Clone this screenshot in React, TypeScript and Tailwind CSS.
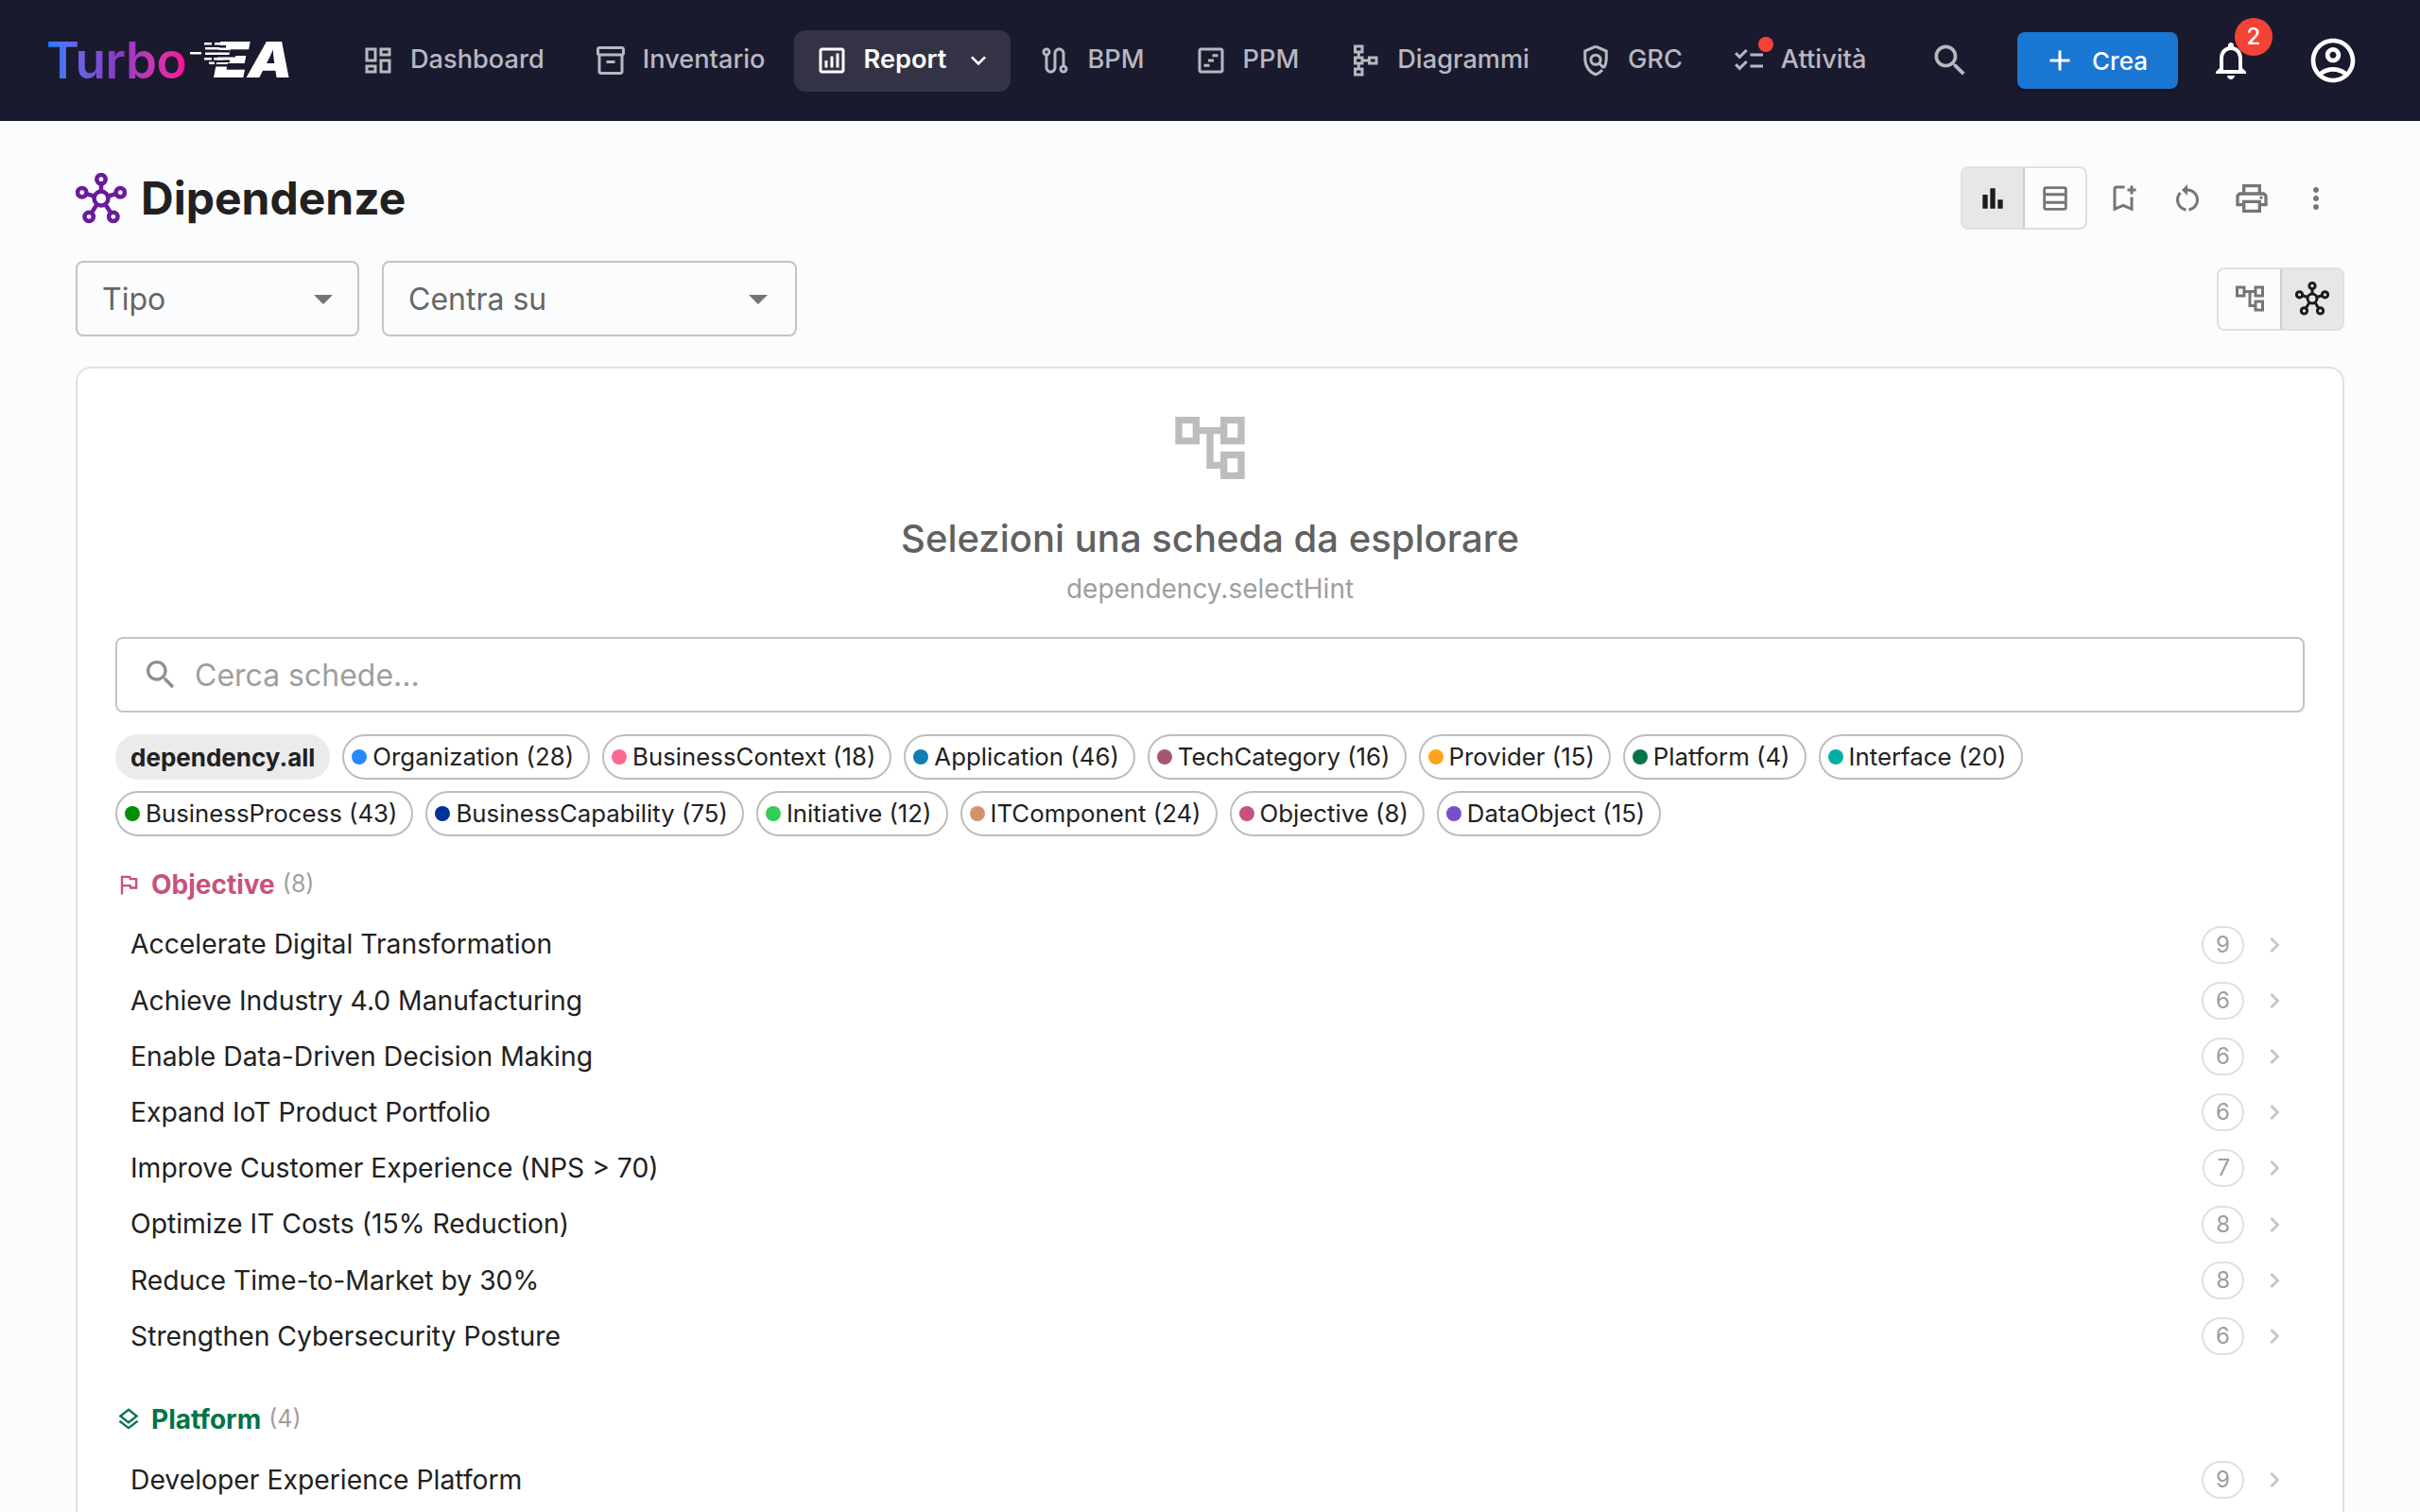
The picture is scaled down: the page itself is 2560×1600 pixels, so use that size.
import React from "react";

type IconProps = { d: string; size: number; className?: string };
const Icon = ({ d, size, className }: IconProps) => (
  <svg viewBox="0 0 24 24" width={size} height={size} fill="currentColor" fillRule="evenodd" className={`shrink-0 ${className ?? ""}`}>
    <path d={d} />
  </svg>
);

const P = {
  dashboard: "M19 5v2h-4V5zM9 5v6H5V5zm10 8v6h-4v-6zM9 17v2H5v-2zM21 3h-8v6h8zM11 3H3v10h8zm10 8h-8v10h8zm-10 4H3v6h8z",
  inventory: "M20 2H4c-1 0-2 .9-2 2v3.01c0 .72.43 1.34 1 1.69V20c0 1.1 1.1 2 2 2h14c.9 0 2-.9 2-2V8.7c.57-.35 1-.97 1-1.69V4c0-1.1-1-2-2-2m-1 18H5V9h14zm1-13H4V4h16zM9 12h6v2H9z",
  assessment: "M19 3H5c-1.1 0-2 .9-2 2v14c0 1.1.9 2 2 2h14c1.1 0 2-.9 2-2V5c0-1.1-.9-2-2-2m0 16H5V5h14zM7 12h2v5H7zm4-3h2v8h-2zm4-2h2v10h-2z",
  route: "M19 15.18V7c0-2.21-1.79-4-4-4s-4 1.79-4 4v10c0 1.1-.9 2-2 2s-2-.9-2-2V8.82C8.16 8.4 9 7.3 9 6c0-1.66-1.34-3-3-3S3 4.34 3 6c0 1.3.84 2.4 2 2.82V17c0 2.21 1.79 4 4 4s4-1.79 4-4V7c0-1.1.9-2 2-2s2 .9 2 2v8.18c-1.16.41-2 1.51-2 2.82 0 1.66 1.34 3 3 3s3-1.34 3-3c0-1.3-.84-2.4-2-2.82M6 5c.55 0 1 .45 1 1s-.45 1-1 1-1-.45-1-1 .45-1 1-1m12 14c-.55 0-1-.45-1-1s.45-1 1-1 1 .45 1 1-.45 1-1 1",
  timeline: "M19 3H5c-1.1 0-2 .9-2 2v14c0 1.1.9 2 2 2h14c1.1 0 2-.9 2-2V5c0-1.1-.9-2-2-2m0 16H5V5h14zM13 7.5h4v2h-4zM10 11h4v2h-4zM7 14.5h4v2H7z",
  schema: "M14 9v2h-3V9H8.5V7H11V1H4v6h2.5v2H4v6h2.5v2H4v6h7v-6H8.5v-2H11v-2h3v2h7V9h-7zM9 5H6V3h3v2zm0 16H6v-2h3v2zm0-8H6v-2h3v2zm10 0h-3v-2h3v2z",
  checklist: "M22 7h-9v2h9zm0 8h-9v2h9zM5.54 11 2 7.46l1.41-1.41 2.12 2.12 4.24-4.24 1.41 1.41zm0 8L2 15.46l1.41-1.41 2.12 2.12 4.24-4.24 1.41 1.41z",
  search: "M15.5 14h-.79l-.28-.27C15.41 12.59 16 11.11 16 9.5 16 5.91 13.09 3 9.5 3S3 5.91 3 9.5 5.91 16 9.5 16c1.61 0 3.09-.59 4.23-1.57l.27.28v.79l5 4.99L20.49 19zm-6 0C7.01 14 5 11.99 5 9.5S7.01 5 9.5 5 14 7.01 14 9.5 11.99 14 9.5 14",
  add: "M19 13h-6v6h-2v-6H5v-2h6V5h2v6h6z",
  bell: "M12 22c1.1 0 2-.9 2-2h-4c0 1.1.9 2 2 2m6-6v-5c0-3.07-1.63-5.64-4.5-6.32V4c0-.83-.67-1.5-1.5-1.5s-1.5.67-1.5 1.5v.68C7.64 5.36 6 7.92 6 11v5l-2 2v1h16v-1zm-2 1H8v-6c0-2.48 1.51-4.5 4-4.5s4 2.02 4 4.5z",
  user: "M12 2C6.48 2 2 6.48 2 12s4.48 10 10 10 10-4.48 10-10S17.52 2 12 2M7.35 18.5C8.66 17.56 10.26 17 12 17s3.34.56 4.65 1.5c-1.31.94-2.91 1.5-4.65 1.5s-3.34-.56-4.65-1.5m10.79-1.38C16.45 15.8 14.32 15 12 15s-4.45.8-6.14 2.12C4.7 15.73 4 13.95 4 12c0-4.42 3.58-8 8-8s8 3.58 8 8c0 1.95-.7 3.73-1.86 5.12M12 6c-1.93 0-3.5 1.57-3.5 3.5S10.07 13 12 13s3.5-1.57 3.5-3.5S13.93 6 12 6m0 5c-.83 0-1.5-.67-1.5-1.5S11.17 8 12 8s1.5.67 1.5 1.5S12.83 11 12 11",
  tree: "M22 11V3h-7v3H9V3H2v8h7V8h2v10h4v3h7v-8h-7v3h-2V8h2v3h7zM7 9H4V5h3v4zm10 6h3v4h-3v-4zm0-10h3v4h-3V5z",
  bars: "M4 9h4v11H4zm12 4h4v7h-4zm-6-9h4v16h-4z",
  rows: "M19 3H5c-1.1 0-2 .9-2 2v14c0 1.1.9 2 2 2h14c1.1 0 2-.9 2-2V5c0-1.1-.9-2-2-2zm0 2v3H5V5h14zm0 5v4H5v-4h14zM5 19v-3h14v3H5z",
  bookmark: "M17 11v6.97l-5-2.14-5 2.14V5h6V3H7c-1.1 0-2 .9-2 2v16l7-3 7 3V11zm4-4h-2v2h-2V7h-2V5h2V3h2v2h2z",
  restart: "M12 5V2L8 6l4 4V7c3.31 0 6 2.69 6 6 0 2.97-2.17 5.43-5 5.91v2.02c3.95-.49 7-3.85 7-7.93 0-4.42-3.58-8-8-8zm-6 8c0-1.65.67-3.15 1.76-4.24L6.34 7.34C4.9 8.79 4 10.79 4 13c0 4.08 3.05 7.44 7 7.93v-2.02c-2.83-.48-5-2.94-5-5.91z",
  print: "M19 8h-1V3H6v5H5c-1.66 0-3 1.34-3 3v6h4v4h12v-4h4v-6c0-1.66-1.34-3-3-3M8 5h8v3H8zm8 14H8v-4h8zm2-4v-2H6v2H4v-4c0-.55.45-1 1-1h14c.55 0 1 .45 1 1v4zM18 10.5a1 1 0 1 0 0 2 1 1 0 0 0 0-2",
  more: "M12 8c1.1 0 2-.9 2-2s-.9-2-2-2-2 .9-2 2 .9 2 2 2m0 2c-1.1 0-2 .9-2 2s.9 2 2 2 2-.9 2-2-.9-2-2-2m0 6c-1.1 0-2 .9-2 2s.9 2 2 2 2-.9 2-2-.9-2-2-2",
  flag: "M12.36 6l.4 2H18v6h-3.36l-.4-2H7V6h5.36M14 4H5v17h2v-7h5.6l.4 2h7V6h-5.6L14 4z",
  layers: "M11.99 18.54l-7.37-5.73L3 14.07l9 7 9-7-1.63-1.27zM12 16l7.36-5.73L21 9l-9-7-9 7 1.63 1.27L12 16zm0-11.47L17.74 9 12 13.47 6.26 9 12 4.53z",
  chevron: "M10 6 8.59 7.41 13.17 12l-4.58 4.59L10 18l6-6z",
  expand: "M16.59 8.59 12 13.17 7.41 8.59 6 10l6 6 6-6z",
  arrow: "M7 10l5 5 5-5z",
};

const Hub = ({ size, className }: { size: number; className?: string }) => (
  <svg viewBox="0 0 24 24" width={size} height={size} fill="none" stroke="currentColor" strokeWidth="2" className={`shrink-0 ${className ?? ""}`}>
    <circle cx="12" cy="12" r="3.3" />
    <circle cx="12" cy="3" r="2.1" />
    <circle cx="3" cy="9.2" r="2.1" />
    <circle cx="21" cy="9.2" r="2.1" />
    <circle cx="6.3" cy="20.6" r="2.1" />
    <circle cx="17.7" cy="20.6" r="2.1" />
    <path d="M12 5v3.8M5 9.8l4 1.2M19 9.8l-4 1.2M7.4 18.9l2.7-4.2M16.6 18.9l-2.7-4.2" />
  </svg>
);

const Shield = () => (
  <svg viewBox="0 0 24 24" width={36} height={36} fill="none" stroke="currentColor" strokeWidth="2" className="shrink-0">
    <path d="M12 2.1 4.5 5.4v5.6c0 4.9 3.2 9.6 7.5 10.9 1.8-.6 3.4-1.7 4.6-3.2" />
    <path d="M12 2.1l7.5 3.3v5.6c0 2.2-.6 4.3-1.7 6.1" />
    <circle cx="12" cy="11.5" r="3.4" />
    <path d="M14.5 14l3.3 3.3" />
  </svg>
);

const navBefore = [
  { label: "Dashboard", d: P.dashboard },
  { label: "Inventario", d: P.inventory },
];
const navAfter = [
  { label: "BPM", d: P.route },
  { label: "PPM", d: P.timeline },
  { label: "Diagrammi", d: P.schema },
];

const chips1 = [
  ["Organization (28)", "bg-[#2889ff]"],
  ["BusinessContext (18)", "bg-[#fe6690]"],
  ["Application (46)", "bg-[#0f7eb5]"],
  ["TechCategory (16)", "bg-[#a6566d]"],
  ["Provider (15)", "bg-[#ffa31f]"],
  ["Platform (4)", "bg-[#027446]"],
  ["Interface (20)", "bg-[#02afa4]"],
];
const chips2 = [
  ["BusinessProcess (43)", "bg-[#028f00]"],
  ["BusinessCapability (75)", "bg-[#003399]"],
  ["Initiative (12)", "bg-[#33cc58]"],
  ["ITComponent (24)", "bg-[#d29270]"],
  ["Objective (8)", "bg-[#c7527d]"],
  ["DataObject (15)", "bg-[#774fcc]"],
];

const objectives: [string, number][] = [
  ["Accelerate Digital Transformation", 9],
  ["Achieve Industry 4.0 Manufacturing", 6],
  ["Enable Data-Driven Decision Making", 6],
  ["Expand IoT Product Portfolio", 6],
  ["Improve Customer Experience (NPS > 70)", 7],
  ["Optimize IT Costs (15% Reduction)", 8],
  ["Reduce Time-to-Market by 30%", 8],
  ["Strengthen Cybersecurity Posture", 6],
];

const NavItem = ({ label, children, className }: { label: string; children: React.ReactNode; className?: string }) => (
  <div className={`flex h-[65px] items-center gap-4 px-[22px] text-[27.2px] font-medium text-[#b8b8c0] ${className ?? ""}`}>
    {children}
    <span className="mb-[2px]">{label}</span>
  </div>
);

const Chip = ({ label, dot }: { label: string; dot: string }) => (
  <div className="flex h-[48px] items-center rounded-full border-2 border-[#bdbdbd] pl-[8px] pr-[15px] text-[25.8px] text-[#212121]">
    <span className={`mr-[6px] h-[16px] w-[16px] rounded-full ${dot}`} />
    <span>{label}</span>
  </div>
);

const Row = ({ label, n }: { label: string; n: number }) => (
  <div className="flex h-[59.2px] items-center justify-between px-4">
    <span className="text-[28.3px] text-[#212121]">{label}</span>
    <div className="flex items-center gap-4">
      <span className="flex h-[40px] items-center rounded-full border-2 border-[#e0e0e0] px-[13px] text-[24px] text-[#9e9e9e]">{n}</span>
      <Icon d={P.chevron} size={32} className="text-[#c4c4c4]" />
    </div>
  </div>
);

export default function App() {
  return (
    <div className="h-[1600px] overflow-hidden bg-[#fbfcfe] font-['Inter',sans-serif]">
      <header className="flex h-[128px] items-center bg-[#1a1a2e]">
        <div className="relative ml-[49px] mr-[56px] flex h-[60px] w-[255px] shrink-0 items-center">
          <span className="bg-gradient-to-r from-[#0f80ff] via-[#8a38c8] to-[#ff0099] bg-clip-text text-[53px] font-semibold leading-none tracking-[-0.5px] text-transparent">Turbo</span>
          <span className="absolute left-[177px] top-[4px] origin-left scale-x-[1.15] text-[52px] font-black italic leading-none tracking-[-1px] text-white">EA</span>
          <svg className="absolute left-[150px] top-0" width="60" height="60" viewBox="0 0 60 60">
            <g fill="#1a1a2e">
              <rect x="26" y="14" width="14" height="2.5" />
              <rect x="26" y="19" width="18" height="2.5" />
              <rect x="26" y="24" width="24" height="2.5" />
              <rect x="26" y="29.5" width="18" height="2.5" />
              <rect x="24" y="34" width="18" height="2.5" />
            </g>
            <g fill="#ffffff">
              <rect x="17" y="11" width="8" height="2.5" />
              <rect x="28" y="11" width="10" height="2.5" />
              <rect x="2" y="21" width="12" height="2.5" />
              <rect x="18" y="16" width="15" height="2.5" />
              <rect x="18" y="21.5" width="15" height="2.5" />
              <rect x="17" y="27" width="8" height="2.5" />
              <rect x="27" y="27" width="10" height="2.5" />
              <rect x="22" y="31.5" width="6" height="2.5" />
            </g>
          </svg>
        </div>
        <div className="flex items-center gap-2">
          {navBefore.map((n) => (
            <NavItem key={n.label} label={n.label}>
              <Icon d={n.d} size={36} />
            </NavItem>
          ))}
          <div className="mr-[-1px] flex h-[65px] items-center gap-4 rounded-[12px] bg-[#333345] pl-[22px] pr-[16px] text-[27.2px] font-semibold text-white">
            <Icon d={P.assessment} size={36} />
            <span className="mb-[2px]">Report</span>
            <Icon d={P.expand} size={32} className="mx-[2px]" />
          </div>
          {navAfter.map((n) => (
            <NavItem key={n.label} label={n.label}>
              <Icon d={n.d} size={36} />
            </NavItem>
          ))}
          <NavItem label="GRC">
            <Shield />
          </NavItem>
          <NavItem label="Attività">
            <div className="relative">
              <Icon d={P.checklist} size={36} />
              <span className="absolute right-[-8px] top-[-7px] h-[16px] w-[16px] rounded-full bg-[#f44336]" />
            </div>
          </NavItem>
        </div>
        <div className="ml-auto flex items-center pr-[64px]">
          <Icon d={P.search} size={44} className="text-[#b8b8c0]" />
          <div className="ml-[49px] flex h-[60px] w-[170px] items-center gap-4 rounded-[8px] bg-[#1976d2] pl-[27px] text-[26px] font-medium text-white shadow-[0_3px_3px_rgba(0,0,0,0.25)]">
            <Icon d={P.add} size={36} />
            <span>Crea</span>
          </div>
          <div className="relative ml-[32px]">
            <Icon d={P.bell} size={48} className="text-white" />
            <span className="absolute left-[28px] top-[-21px] flex h-[40px] w-[40px] items-center justify-center rounded-full bg-[#f44336] text-[24px] font-medium text-white">2</span>
          </div>
          <Icon d={P.user} size={56} className="ml-[56px] text-white" />
        </div>
      </header>

      <main className="px-20 pt-12">
        <div className="flex h-[67px] items-center justify-between">
          <div className="flex items-center gap-[15px]">
            <Hub size={54} className="text-[#6a1b9a]" />
            <h1 className="text-[48px] font-bold leading-none text-[#212121]">Dipendenze</h1>
          </div>
          <div className="flex items-center">
            <div className="flex h-[67px] rounded-[8px] border-2 border-[#e0e0e0]">
              <div className="flex w-[66px] items-center justify-center rounded-l-[6px] border-r-2 border-[#cdcdcf] bg-[#e6e7e9] text-[#1c1c1c]">
                <Icon d={P.bars} size={32} />
              </div>
              <div className="flex w-[64px] items-center justify-center text-[#757575]">
                <Icon d={P.rows} size={34} />
              </div>
            </div>
            <Icon d={P.bookmark} size={36} className="ml-[20px] text-[#757575]" />
            <Icon d={P.restart} size={36} className="ml-[32px] text-[#757575]" />
            <Icon d={P.print} size={40} className="ml-[30px] text-[#757575]" />
            <Icon d={P.more} size={36} className="ml-[30px] mr-[12px] text-[#757575]" />
          </div>
        </div>

        <div className="mt-[33px] flex h-[80px] items-center">
          <div className="flex h-[80px] w-[300px] items-center justify-between rounded-[8px] border-2 border-[#c4c4c4] pl-[26px] pr-[12px] text-[32px] text-[#666666]">
            <span className="mt-[2px]">Tipo</span>
            <Icon d={P.arrow} size={48} className="text-[#757575]" />
          </div>
          <div className="ml-[24px] flex h-[80px] w-[439px] items-center justify-between rounded-[8px] border-2 border-[#c4c4c4] pl-[26px] pr-[15px] text-[32px] text-[#666666]">
            <span className="mt-[2px]">Centra su</span>
            <Icon d={P.arrow} size={48} className="text-[#757575]" />
          </div>
          <div className="ml-auto flex h-[67px] rounded-[8px] border-2 border-[#e0e0e0]">
            <div className="flex w-[65px] items-center justify-center text-[#757575]">
              <Icon d={P.tree} size={36} />
            </div>
            <div className="flex w-[66px] items-center justify-center rounded-r-[6px] border-l-2 border-[#cdcdcf] bg-[#e6e7e9] text-[#1c1c1c]">
              <Hub size={36} />
            </div>
          </div>
        </div>

        <section className="mt-[32px] h-[1300px] rounded-[16px] border-2 border-[#e0e0e0] bg-white p-[40px]">
          <div className="flex flex-col items-center">
            <Icon d={P.tree} size={88} className="text-[#bdbdbd]" />
            <div className="mt-[28px] text-[40px] font-medium leading-[48px] text-[#616161]">Selezioni una scheda da esplorare</div>
            <div className="mt-[7px] text-[28px] leading-[44px] text-[#9e9e9e]">dependency.selectHint</div>
          </div>
          <div className="mt-[29px] flex h-[80px] items-center rounded-[8px] border-2 border-[#c4c4c4] pl-[26px] text-[32px] text-[#9e9e9e]">
            <Icon d={P.search} size={40} className="text-[#8f8f8f]" />
            <span className="ml-[16px] mt-[2px]">Cerca schede...</span>
          </div>

          <div className="mt-[23px] flex gap-[13px]">
            <div className="flex h-[48px] items-center rounded-full bg-[#ebebeb] px-[16px] text-[26px] font-bold text-[#212121]">dependency.all</div>
            {chips1.map(([l, c]) => (
              <Chip key={l} label={l} dot={c} />
            ))}
          </div>
          <div className="mt-[12px] flex gap-[13px]">
            {chips2.map(([l, c]) => (
              <Chip key={l} label={l} dot={c} />
            ))}
          </div>

          <div className="mt-[31px] flex h-[40px] items-center">
            <Icon d={P.flag} size={28} className="text-[#c7527d]" />
            <span className="ml-[10px] text-[28px] font-bold text-[#c7527d]">Objective</span>
            <span className="ml-[8px] text-[25px] text-[#9e9e9e]">(8)</span>
          </div>
          <div className="mt-[14px]">
            {objectives.map(([l, n]) => (
              <Row key={l} label={l} n={n} />
            ))}
          </div>

          <div className="mt-[38px] flex h-[40px] items-center">
            <Icon d={P.layers} size={28} className="text-[#027446]" />
            <span className="ml-[10px] text-[28px] font-bold text-[#027446]">Platform</span>
            <span className="ml-[8px] text-[25px] text-[#9e9e9e]">(4)</span>
          </div>
          <div className="mt-[15px]">
            <Row label="Developer Experience Platform" n={9} />
          </div>
        </section>
      </main>
    </div>
  );
}
